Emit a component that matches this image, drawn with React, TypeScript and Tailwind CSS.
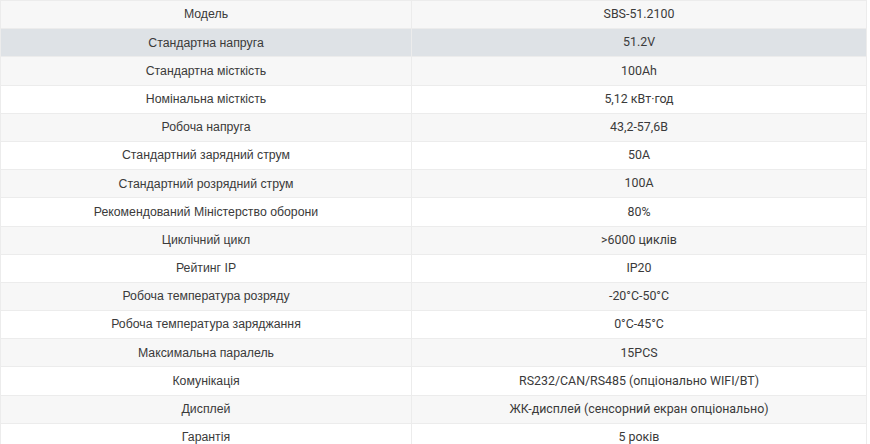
const rows: [string, string][] = [
  ['Модель', 'SBS-51.2100'],
  ['Стандартна напруга', '51.2V'],
  ['Стандартна місткість', '100Ah'],
  ['Номінальна місткість', '5,12 кВт·год'],
  ['Робоча напруга', '43,2-57,6В'],
  ['Стандартний зарядний струм', '50А'],
  ['Стандартний розрядний струм', '100А'],
  ['Рекомендований Міністерство оборони', '80%'],
  ['Циклічний цикл', '>6000 циклів'],
  ['Рейтинг IP', 'IP20'],
  ['Робоча температура розряду', '-20°C-50°C'],
  ['Робоча температура заряджання', '0°C-45°C'],
  ['Максимальна паралель', '15PCS'],
  ['Комунікація', 'RS232/CAN/RS485 (опціонально WIFI/BT)'],
  ['Дисплей', 'ЖК-дисплей (сенсорний екран опціонально)'],
  ['Гарантія', '5 років'],
];

export default function App() {
  return (
    <div className="w-[870px] h-[444px] overflow-hidden bg-white">
      <table className="w-[867px] border-collapse text-[#3a3a3a]">
        <tbody>
          {rows.map(([k, v], i) => (
            <tr
              key={k}
              className={i === 1 ? 'bg-[#dee2e6]' : i % 2 === 0 ? 'bg-[#f7f7f7]' : 'bg-white'}
            >
              <td className="h-[28.2px] w-[411px] border border-[#ececec] p-0 text-center text-[12.3px] font-['Liberation_Sans',Arial,sans-serif]">
                {k}
              </td>
              <td className="h-[28.2px] border border-[#ececec] p-0 text-center text-[12.4px] font-['Roboto',sans-serif]">
                {v}
              </td>
            </tr>
          ))}
        </tbody>
      </table>
    </div>
  );
}
